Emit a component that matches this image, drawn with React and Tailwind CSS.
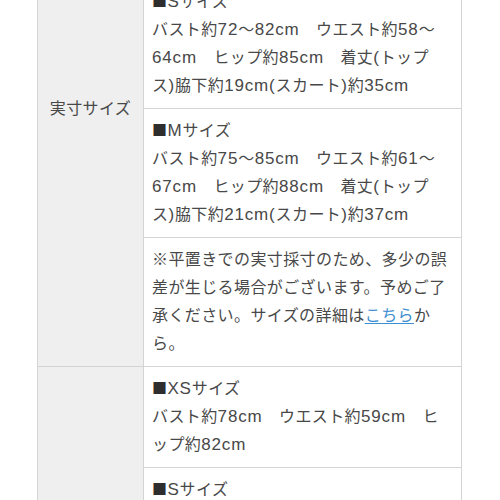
import React from "react";

const cell = "border border-[#d4d4d4] bg-white px-2 py-2 text-left align-top font-normal";
const head = "w-[106px] border border-[#d4d4d4] bg-[#efefef] text-center align-middle font-normal";

function Rich({ text }) {
  const parts = text.split(/([A-Za-z0-9()]+|■)/);
  return (
    <>
      {parts.map((p, i) => {
        if (!p) return null;
        if (p === "■")
          return (
            <span
              key={i}
              className="text-[15px] leading-[16px] text-[#2e2e2e]"
              style={{ fontFamily: '"Noto Sans CJK JP", sans-serif' }}
            >
              ■
            </span>
          );
        if (/^[A-Za-z0-9()]+$/.test(p))
          return (
            <span key={i} className="text-[17px] leading-[16px] tracking-[0.85px]">
              {p}
            </span>
          );
        return <React.Fragment key={i}>{p}</React.Fragment>;
      })}
    </>
  );
}

function Lines({ lines }) {
  return (
    <>
      {lines.map((l, i) => (
        <React.Fragment key={i}>
          {i > 0 && <br />}
          <Rich text={l} />
        </React.Fragment>
      ))}
    </>
  );
}

export default function App() {
  return (
    <div className="w-[500px] h-[500px] overflow-hidden bg-white">
      <table
        className="ml-[37px] -mt-[150px] w-[425px] border-collapse text-[16px] leading-[28px] tracking-[0.4px] text-[#484848]"
        style={{ fontFamily: '"Liberation Sans", "Noto Sans CJK JP", sans-serif' }}
      >
        <tbody>
          <tr>
            <th rowSpan={4} className={head}>実寸サイズ</th>
            <td className={cell}>
              <Lines
                lines={[
                  "■XSサイズ",
                  "バスト約69〜79cm　ウエスト約55〜",
                  "61cm　ヒップ約82cm　着丈(トップ",
                  "ス)脇下約17cm(スカート)約33cm",
                ]}
              />
            </td>
          </tr>
          <tr>
            <td className={cell}>
              <Lines
                lines={[
                  "■Sサイズ",
                  "バスト約72〜82cm　ウエスト約58〜",
                  "64cm　ヒップ約85cm　着丈(トップ",
                  "ス)脇下約19cm(スカート)約35cm",
                ]}
              />
            </td>
          </tr>
          <tr>
            <td className={cell}>
              <Lines
                lines={[
                  "■Mサイズ",
                  "バスト約75〜85cm　ウエスト約61〜",
                  "67cm　ヒップ約88cm　着丈(トップ",
                  "ス)脇下約21cm(スカート)約37cm",
                ]}
              />
            </td>
          </tr>
          <tr>
            <td className={cell}>
              ※平置きでの実寸採寸のため、多少の誤
              <br />
              差が生じる場合がございます。予めご了
              <br />
              承ください。サイズの詳細は
              <a href="#" className="text-[#3d8fd1] underline decoration-[#3d8fd1] underline-offset-2">こちら</a>
              か
              <br />
              ら。
            </td>
          </tr>
          <tr>
            <th rowSpan={3} className={head}>ヌードサイズ</th>
            <td className={cell}>
              <Lines
                lines={[
                  "■XSサイズ",
                  "バスト約78cm　ウエスト約59cm　ヒ",
                  "ップ約82cm",
                ]}
              />
            </td>
          </tr>
          <tr>
            <td className={cell}>
              <Lines
                lines={[
                  "■Sサイズ",
                  "バスト約81cm　ウエスト約62cm　ヒ",
                  "ップ約85cm",
                ]}
              />
            </td>
          </tr>
          <tr>
            <td className={cell}>
              <Lines
                lines={[
                  "■Mサイズ",
                  "バスト約84cm　ウエスト約65cm　ヒ",
                  "ップ約88cm",
                ]}
              />
            </td>
          </tr>
        </tbody>
      </table>
    </div>
  );
}
